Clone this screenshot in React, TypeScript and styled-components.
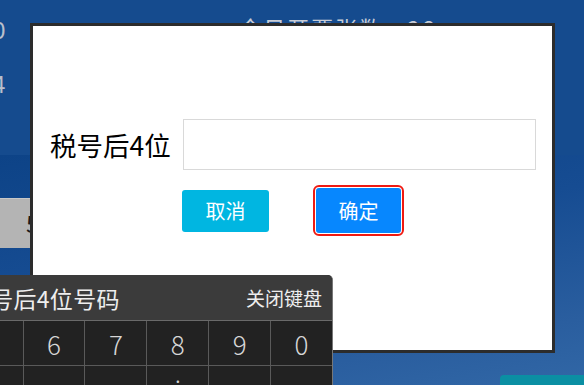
import styled, { createGlobalStyle } from "styled-components";

const GlobalStyle = createGlobalStyle`
  html, body {
    margin: 0;
    padding: 0;
    overflow: hidden;
  }
  * {
    box-sizing: border-box;
  }
`;

const FONT = `"Noto Sans CJK SC", "Noto Sans", "Liberation Sans", sans-serif`;

const digits = ["1", "2", "3", "4", "5", "6", "7", "8", "9", "0"];
const letters = ["q", "w", "e", "r", "t", "y", "u", "i", "o", "p"];

function App() {
  return (
    <Screen>
      <GlobalStyle />
      <TopBand>
        <SideNumbers>
          <SideNumber>0</SideNumber>
          <SideNumber>4</SideNumber>
        </SideNumbers>
        <Stat>今日开票张数：26</Stat>
      </TopBand>
      <Lower>
        <GrayField>5</GrayField>
        <Footer>
          <TealButton />
        </Footer>
      </Lower>

      <Dialog>
        <FormRow>
          <Label>税号后4位</Label>
          <Input />
        </FormRow>
        <Actions>
          <Button $variant="cancel">取消</Button>
          <Button $variant="ok" $focused>
            确定
          </Button>
        </Actions>
      </Dialog>

      <Keyboard>
        <KeyboardHead>
          <KeyboardTitle>请输入税号后4位号码</KeyboardTitle>
          <CloseLink>关闭键盘</CloseLink>
        </KeyboardHead>
        <KeyRow>
          {digits.map((d) => (
            <Key key={d}>{d}</Key>
          ))}
        </KeyRow>
        <KeyRow>
          {letters.map((l) => (
            <Key key={l}>{l}</Key>
          ))}
        </KeyRow>
      </Keyboard>
    </Screen>
  );
}

const Screen = styled.div`
  position: relative;
  width: 584px;
  height: 385px;
  overflow: hidden;
  display: flex;
  flex-direction: column;
  font-family: ${FONT};
`;

const TopBand = styled.div`
  height: 155px;
  background: #154b8e;
  display: flex;
  align-items: flex-start;
`;

const SideNumbers = styled.div`
  display: flex;
  flex-direction: column;
  gap: 20px;
  margin-left: -8px;
  padding-top: 14px;
`;

const SideNumber = styled.div`
  font-family: "Liberation Sans", sans-serif;
  font-size: 24px;
  line-height: 34px;
  color: #b9bfcc;
`;

const Stat = styled.div`
  margin-left: 234px;
  margin-top: 12px;
  font-size: 22px;
  line-height: 30px;
  color: #c9cdd6;
  letter-spacing: 2px;
`;

const Lower = styled.div`
  flex: 1;
  display: flex;
  flex-direction: column;
  background: linear-gradient(170deg, #0d4387 0%, #164c92 40%, #2a5e9f 80%, #3167a6 100%);
  padding-top: 43px;
`;

const GrayField = styled.div`
  width: 60px;
  height: 50px;
  background: #b4b4b4;
  border-top: 1px solid #c8c8c8;
  padding-left: 26px;
  font-size: 24px;
  line-height: 48px;
  color: #1a1a1a;
`;

const Footer = styled.div`
  margin-top: auto;
  display: flex;
  justify-content: flex-end;
`;

const TealButton = styled.div`
  width: 84px;
  height: 12px;
  margin-bottom: -2px;
  background: #0b8fa3;
  border-radius: 4px 0 0 0;
`;

const Dialog = styled.div`
  position: absolute;
  left: 30px;
  top: 23px;
  width: 525px;
  height: 330px;
  background: #fff;
  border: 3px solid #2c2c2c;
  padding: 93px 16px 0 17px;
  display: flex;
  flex-direction: column;
`;

const FormRow = styled.div`
  display: flex;
  align-items: center;
  gap: 13px;
`;

const Label = styled.label`
  width: 120px;
  font-size: 26.5px;
  color: #000;
  white-space: nowrap;
`;

const Input = styled.input`
  flex: 1;
  height: 51px;
  border: 1px solid #d9d9d9;
  outline: none;
  background: #fff;
`;

const Actions = styled.div`
  display: flex;
  align-items: center;
  gap: 47px;
  margin-top: 18px;
  padding-left: 132px;
`;

const Button = styled.button<{ $variant: "cancel" | "ok"; $focused?: boolean }>`
  width: ${(p) => (p.$variant === "ok" ? 85 : 87)}px;
  height: ${(p) => (p.$variant === "ok" ? 45 : 42)}px;
  border: none;
  border-radius: 3px;
  background: ${(p) => (p.$variant === "ok" ? "#0787fe" : "#00b6e1")};
  color: #fff;
  font-family: ${FONT};
  font-size: 20px;
  padding: 0;
  outline: ${(p) => (p.$focused ? "2px solid #f01a12" : "none")};
  outline-offset: 1px;
`;

const Keyboard = styled.div`
  position: absolute;
  left: -287px;
  top: 275px;
  width: 620px;
  background: #222;
  border-right: 1px solid #777;
  border-radius: 0 5px 0 0;
`;

const KeyboardHead = styled.div`
  height: 46px;
  background: #3b3b3b;
  border-radius: 0 5px 0 0;
  border-bottom: 1px solid #6a6a6a;
  display: flex;
  align-items: center;
  justify-content: space-between;
  padding: 0 10px 0 184px;
`;

const KeyboardTitle = styled.div`
  font-size: 23px;
  color: #eee;
  letter-spacing: 0.3px;
`;

const CloseLink = styled.div`
  font-size: 19px;
  color: #eee;
`;

const KeyRow = styled.div`
  display: grid;
  grid-template-columns: repeat(10, 1fr);
  border-bottom: 1px solid #5a5a5a;
`;

const Key = styled.div`
  height: 44px;
  display: flex;
  align-items: center;
  justify-content: center;
  border-left: 1px solid #5a5a5a;
  color: #d6d6d6;
  font-size: 26px;
  font-weight: 300;
`;

export default App;
